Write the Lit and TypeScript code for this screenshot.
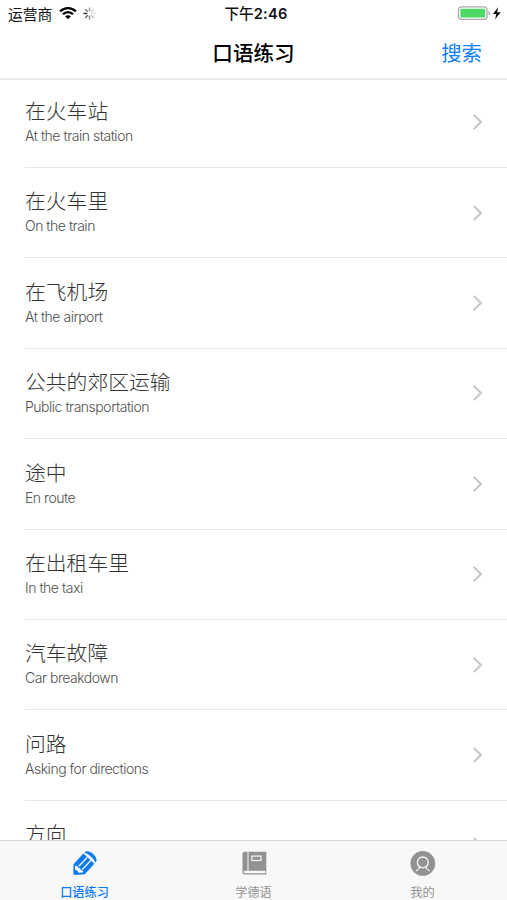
import { LitElement, html, svg, css } from "lit";
import { customElement } from "lit/decorators.js";

const topics = [
  ["在火车站", "At the train station"],
  ["在火车里", "On the train"],
  ["在飞机场", "At the airport"],
  ["公共的郊区运输", "Public transportation"],
  ["途中", "En route"],
  ["在出租车里", "In the taxi"],
  ["汽车故障", "Car breakdown"],
  ["问路", "Asking for directions"],
  ["方向", ""],
];

@customElement("status-bar")
class StatusBar extends LitElement {
  static styles = css`
    :host {
      display: grid;
      grid-template-columns: 1fr auto 1fr;
      align-items: center;
      height: 26px;
      padding: 0 5px 0 8px;
      box-sizing: border-box;
      font-size: 14.8px;
      line-height: 25px;
      color: #111;
    }
    .left { display: flex; align-items: center; }
    .carrier { font-weight: 400; }
    .time { font-family: Inter, "Noto Sans CJK SC", sans-serif; font-size: 14.6px; font-weight: 600; letter-spacing: 0.25px; padding-left: 2px; }
    .time span { font-family: "Noto Sans CJK SC", sans-serif; font-weight: 500; letter-spacing: 0; }
    .wifi { margin-left: 7px; margin-top: -2px; }
    .spin { margin-left: 6px; margin-top: -1px; }
    .right { justify-self: end; display: flex; align-items: center; margin-top: -1px; }
    svg { display: block; }
  `;
  render() {
    const greys = ["#999", "#ccc", "#ddd", "#bbb", "#888", "#666", "#333", "#777"];
    return html`
      <div class="left">
        <span class="carrier">运营商</span>
        <svg class="wifi" width="18" height="14" viewBox="0 0 18 14">
          <g fill="none" stroke="#000" stroke-width="2.3">
            <path d="M1.2 5.4C5.4 0.9 12.6 0.9 16.8 5.4" />
            <path d="M4 8.3C6.8 5.4 11.2 5.4 14 8.3" />
          </g>
          <path d="M9 13.2L6.1 10.3C7.6 8.8 10.4 8.8 11.9 10.3Z" fill="#000" />
        </svg>
        <svg class="spin" width="13" height="13" viewBox="-6.5 -6.5 13 13">
          ${greys.map((c, i) => svg`<path d="M0 -2.8V-5.5" stroke=${c} stroke-width="1.4" stroke-linecap="round" transform="rotate(${i * 45})" />`)}
        </svg>
      </div>
      <div class="time"><span>下午</span>2:46</div>
      <div class="right">
        <svg width="45" height="16" viewBox="0 0 45 16">
          <rect x="1.5" y="1.8" width="28.5" height="12.6" rx="3" fill="#fff" stroke="#aaa" stroke-width="1.3" />
          <rect x="3.4" y="3.7" width="24.7" height="8.8" rx="1" fill="#4cd964" />
          <path d="M31.5 6a2.3 2.3 0 0 1 0 4.4z" fill="#aaa" />
          <path d="M41.1 2.2L36 8.9H39.4L38.1 14.2L43.7 7.2H40.1Z" fill="#000" />
        </svg>
      </div>
    `;
  }
}

@customElement("topic-row")
class TopicRow extends LitElement {
  static properties = { name: {}, sub: {} };
  static styles = css`
    :host { display: block; padding-left: 25px; height: 90.4px; flex: none; box-sizing: border-box; }
    .row {
      display: flex;
      align-items: center;
      justify-content: space-between;
      height: 100%;
      box-sizing: border-box;
      padding-right: 24px;
      border-bottom: 1px solid #e8e8e8;
    }
    .text { height: 54.6px; }
    .name { font-weight: 300; font-size: 20.8px; line-height: 30px; color: #333; white-space: nowrap; }
    .sub { font-family: Inter, sans-serif; font-weight: 300; font-size: 14px; letter-spacing: -0.48px; line-height: 20px; margin-top: 1px; color: #505050; white-space: nowrap; }
    svg { display: block; }
  `;
  declare name: string;
  declare sub: string;
  render() {
    return html`<div class="row">
      <div class="text"><div class="name">${this.name}</div><div class="sub">${this.sub}</div></div>
      <svg width="11" height="16" viewBox="0 0 11 16"><path d="M1.7 0.9L9 8L1.7 15.1" fill="none" stroke="#c4c4c8" stroke-width="2" /></svg>
    </div>`;
  }
}

@customElement("tab-item")
class TabItem extends LitElement {
  static properties = { label: {}, icon: {}, active: { type: Boolean, reflect: true } };
  declare label: string;
  declare icon: string;
  declare active: boolean;
  static styles = css`
    :host { display: flex; flex-direction: column; align-items: center; padding-top: 8px; color: #929292; }
    :host([active]) { color: #0b7bf2; }
    svg { display: block; }
    .label { font-size: 12.2px; line-height: 18px; margin-top: 5px; font-weight: 400; white-space: nowrap; }
    :host([active]) .label { font-weight: 500; }
  `;
  picture() {
    if (this.icon === "pencil")
      return svg`<path d="M2.5 15.2L12.3 4.6L23.3 14.8L13.8 25.2L4.2 25.9Q2.2 26 2.3 24Z" fill="currentColor" />
        <path d="M13.3 3.6Q15.2 1.8 18 2.6Q22.4 4 24.9 8.6Q26.4 11.7 24.4 13.8Q23.3 10.5 20.1 7.7Q16.7 4.5 13.3 3.6Z" fill="currentColor" />
        <path d="M7.8 17.2L16.1 8.5M11.2 20.6L19.7 11.5" stroke="#f8f8f8" stroke-width="1.3" />
        <path d="M4 17Q6.3 16.2 7 18.4Q9.6 18.4 10 20.9Q12.4 21.2 12.3 23.4L7.7 23.8Q6.9 21.3 4 20.6Z" fill="#f8f8f8" />`;
    if (this.icon === "book")
      return svg`<path d="M4.5 2.7H26.3V25.5H4.6Q2.5 25.5 2.5 23.3V4.8Q2.5 2.7 4.5 2.7Z" fill="currentColor" />
        <path d="M8 2.9V21.8" stroke="#f8f8f8" stroke-width="1" />
        <path d="M4.8 21.8H25.4V24.3H4.8Q3.8 24.3 3.8 23.1Q3.8 21.8 4.8 21.8Z" fill="#f8f8f8" />
        <rect x="11.8" y="7.1" width="9.2" height="4.4" fill="none" stroke="#f8f8f8" stroke-width="1.2" />`;
    return svg`<circle cx="13.8" cy="14.4" r="12.4" fill="currentColor" />
      <circle cx="13.8" cy="13.4" r="5.4" fill="none" stroke="#f8f8f8" stroke-width="1.3" />
      <path d="M10.5 18Q10 20.6 7.4 21.6M17.1 18Q17.6 20.6 20.2 21.6" fill="none" stroke="#f8f8f8" stroke-width="1.3" stroke-linecap="round" />`;
  }
  render() {
    return html`<svg width="28" height="29" viewBox="0 0 28 29">${this.picture()}</svg><span class="label">${this.label}</span>`;
  }
}

@customElement("app-root")
class AppRoot extends LitElement {
  static styles = css`
    :host {
      display: flex;
      flex-direction: column;
      height: 900px;
      overflow: hidden;
      background: #fff;
      font-family: "Noto Sans CJK SC", sans-serif;
    }
    .nav {
      display: grid;
      grid-template-columns: 1fr auto 1fr;
      align-items: center;
      height: 54px;
      flex: none;
      box-sizing: border-box;
      border-bottom: 2px solid #ececec;
      padding: 0 25px;
    }
    .title { grid-column: 2; font-size: 20.6px; font-weight: 500; color: #000; }
    .search { justify-self: end; font-size: 20.4px; color: #0b80f8; }
    .list { flex: 1; min-height: 0; overflow: hidden; display: flex; flex-direction: column; }
    .list topic-row:first-child { margin-top: -2.4px; }
    .tabs {
      display: grid;
      grid-template-columns: repeat(3, 1fr);
      height: 60px;
      flex: none;
      box-sizing: border-box;
      border-top: 1px solid #d4d4d4;
      background: #f8f8f8;
    }
  `;
  render() {
    return html`
      <status-bar></status-bar>
      <div class="nav"><span class="title">口语练习</span><span class="search">搜索</span></div>
      <div class="list">${topics.map(([n, s]) => html`<topic-row .name=${n} .sub=${s}></topic-row>`)}</div>
      <div class="tabs">
        <tab-item active .icon=${"pencil"} .label=${"口语练习"}></tab-item>
        <tab-item .icon=${"book"} .label=${"学德语"}></tab-item>
        <tab-item .icon=${"me"} .label=${"我的"}></tab-item>
      </div>
    `;
  }
}
